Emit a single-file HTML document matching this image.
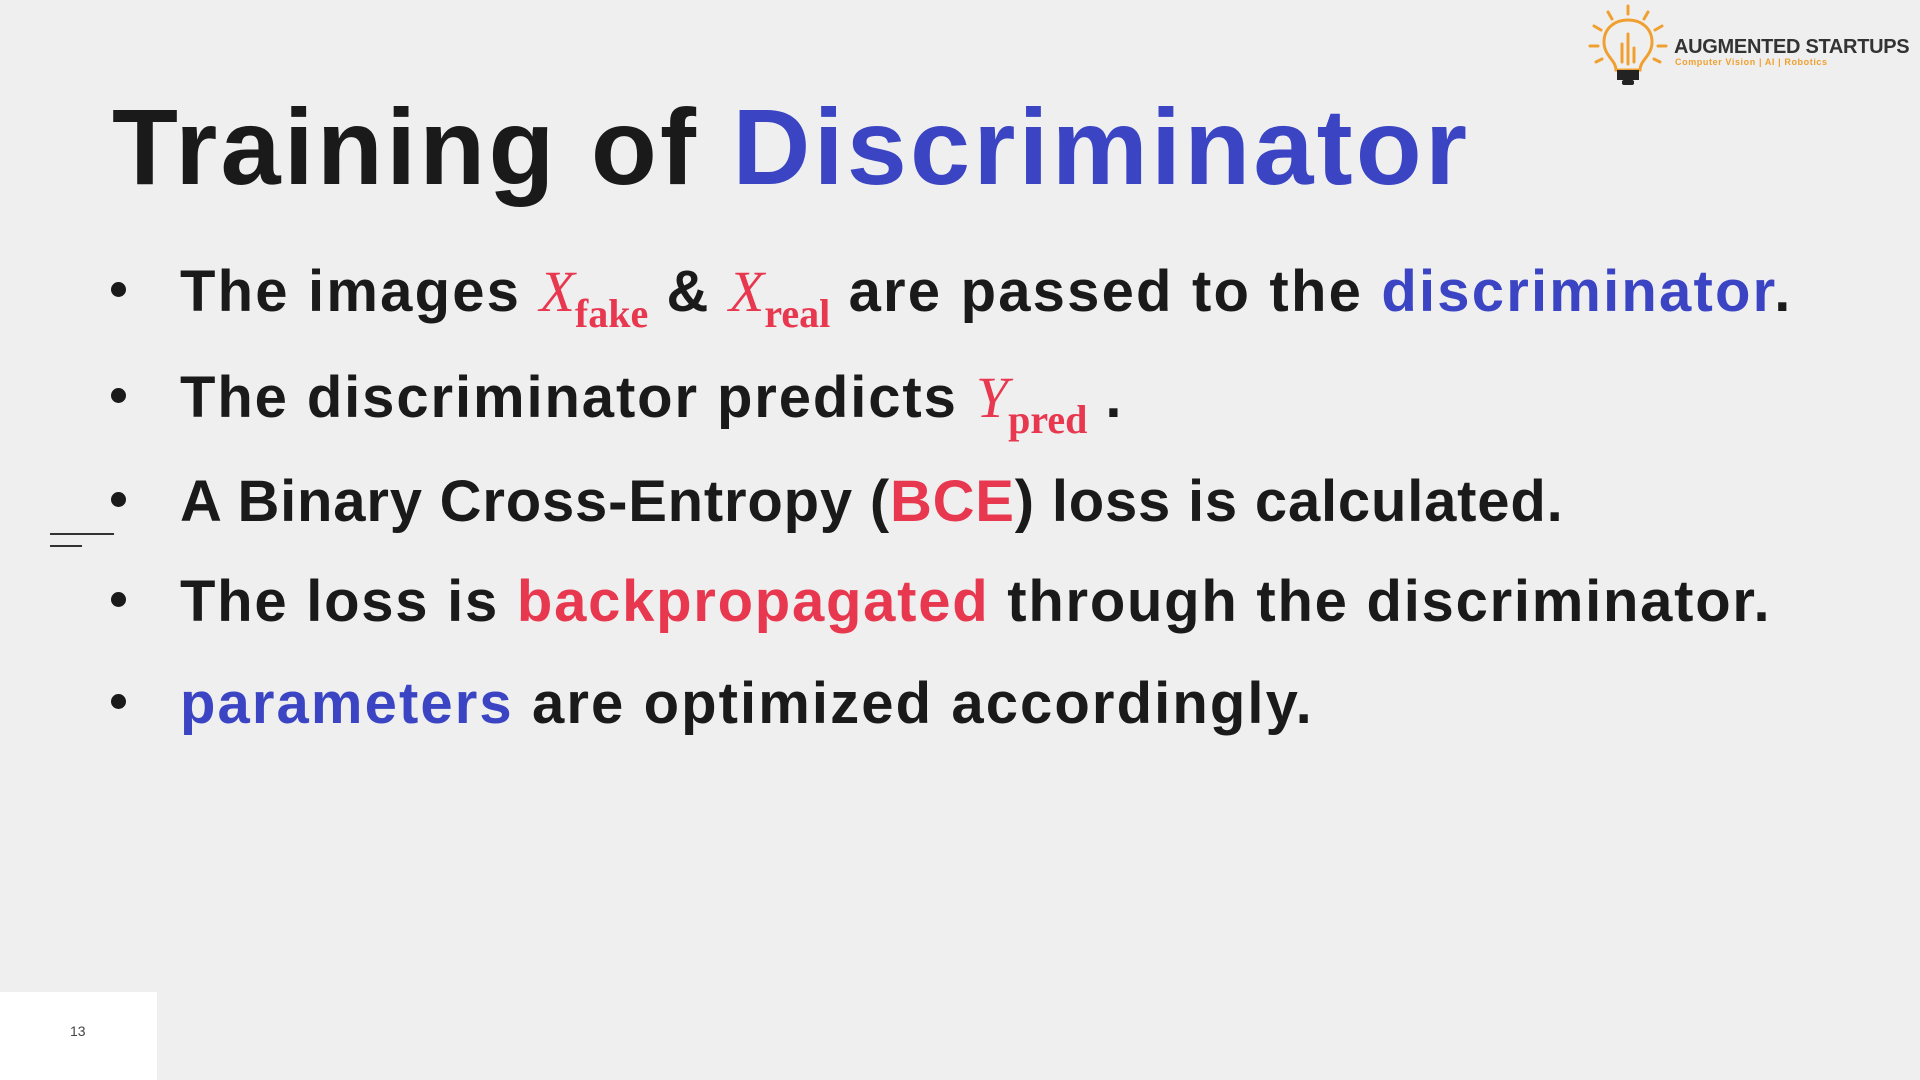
<!DOCTYPE html>
<html><head><meta charset="utf-8"><style>
body{margin:0;width:1920px;height:1080px;background:#efefef;position:relative;overflow:hidden;font-family:"Liberation Sans",sans-serif;}
.title{position:absolute;left:112px;top:84px;font-size:108px;font-weight:bold;color:#1a1a1a;letter-spacing:3.2px;white-space:nowrap;}
.blue{color:#3b45c4}.red{color:#e8384f}
.li{position:absolute;left:180px;font-size:58px;font-weight:bold;color:#1a1a1a;white-space:nowrap;letter-spacing:1.6px;}
.dot{position:absolute;left:111px;width:15px;height:15px;border-radius:50%;background:#1a1a1a;}
.m{font-family:"Liberation Serif",serif;font-style:italic;font-weight:normal;color:#e8384f;font-size:58px;letter-spacing:0}
.s{font-family:"Liberation Serif",serif;font-weight:bold;color:#e8384f;font-size:40px;vertical-align:-16px;font-style:normal;letter-spacing:0}
</style></head><body>
<div class="title">Training of <span class="blue">Discriminator</span></div>

<div class="dot" style="top:282px"></div>
<div class="li" style="top:258px;letter-spacing:2.2px">The images <span class="m">X</span><span class="s">fake</span> &amp; <span class="m">X</span><span class="s">real</span> are passed to the <span class="blue">discriminator</span>.</div>
<div class="dot" style="top:388px"></div>
<div class="li" style="top:364px;letter-spacing:1.9px">The discriminator predicts <span class="m">Y</span><span class="s">pred</span> .</div>
<div class="dot" style="top:492px"></div>
<div class="li" style="top:468px;letter-spacing:0.8px">A Binary Cross-Entropy (<span class="red">BCE</span>) loss is calculated.</div>
<div class="dot" style="top:592px"></div>
<div class="li" style="top:568px;letter-spacing:1.75px">The loss is <span class="red">backpropagated</span> through the discriminator.</div>
<div class="dot" style="top:694px"></div>
<div class="li" style="top:670px;letter-spacing:2.1px"><span class="blue">parameters</span> are optimized accordingly.</div>

<div style="position:absolute;left:50px;top:533px;width:64px;height:2px;background:#333"></div>
<div style="position:absolute;left:50px;top:545px;width:32px;height:2px;background:#333"></div>

<svg style="position:absolute;left:1588px;top:4px" width="80" height="84" viewBox="0 0 80 84">
<g stroke="#f0a030" stroke-width="3" fill="none" stroke-linecap="round">
<line x1="40" y1="2" x2="40" y2="10"/><line x1="20" y1="8" x2="24" y2="15"/><line x1="60" y1="8" x2="56" y2="15"/>
<line x1="6" y1="22" x2="13" y2="26"/><line x1="74" y1="22" x2="67" y2="26"/><line x1="2" y1="42" x2="10" y2="42"/><line x1="78" y1="42" x2="70" y2="42"/>
<line x1="8" y1="58" x2="14" y2="55"/><line x1="72" y1="58" x2="66" y2="55"/>
<path d="M28 66 C28 56 16 52 16 38 C16 24 27 16 40 16 C53 16 64 24 64 38 C64 52 52 56 52 66 Z"/>
<path d="M34 58 L34 40 M40 60 L40 30 M46 58 L46 44"/></g>
<rect x="29" y="66" width="22" height="10" fill="#222"/><rect x="34" y="76" width="12" height="5" rx="2" fill="#222"/>
</svg>
<div style="position:absolute;left:1674px;top:36px;font-size:20px;font-weight:bold;color:#333;white-space:nowrap;letter-spacing:-0.3px">AUGMENTED STARTUPS</div>
<div style="position:absolute;left:1675px;top:57px;font-size:9px;font-weight:bold;color:#f0a030;white-space:nowrap;letter-spacing:0.6px">Computer Vision | AI | Robotics</div>

<div style="position:absolute;left:0;top:992px;width:157px;height:88px;background:#fff"></div>
<div style="position:absolute;left:70px;top:1023px;font-size:14px;color:#444">13</div>
</body></html>
